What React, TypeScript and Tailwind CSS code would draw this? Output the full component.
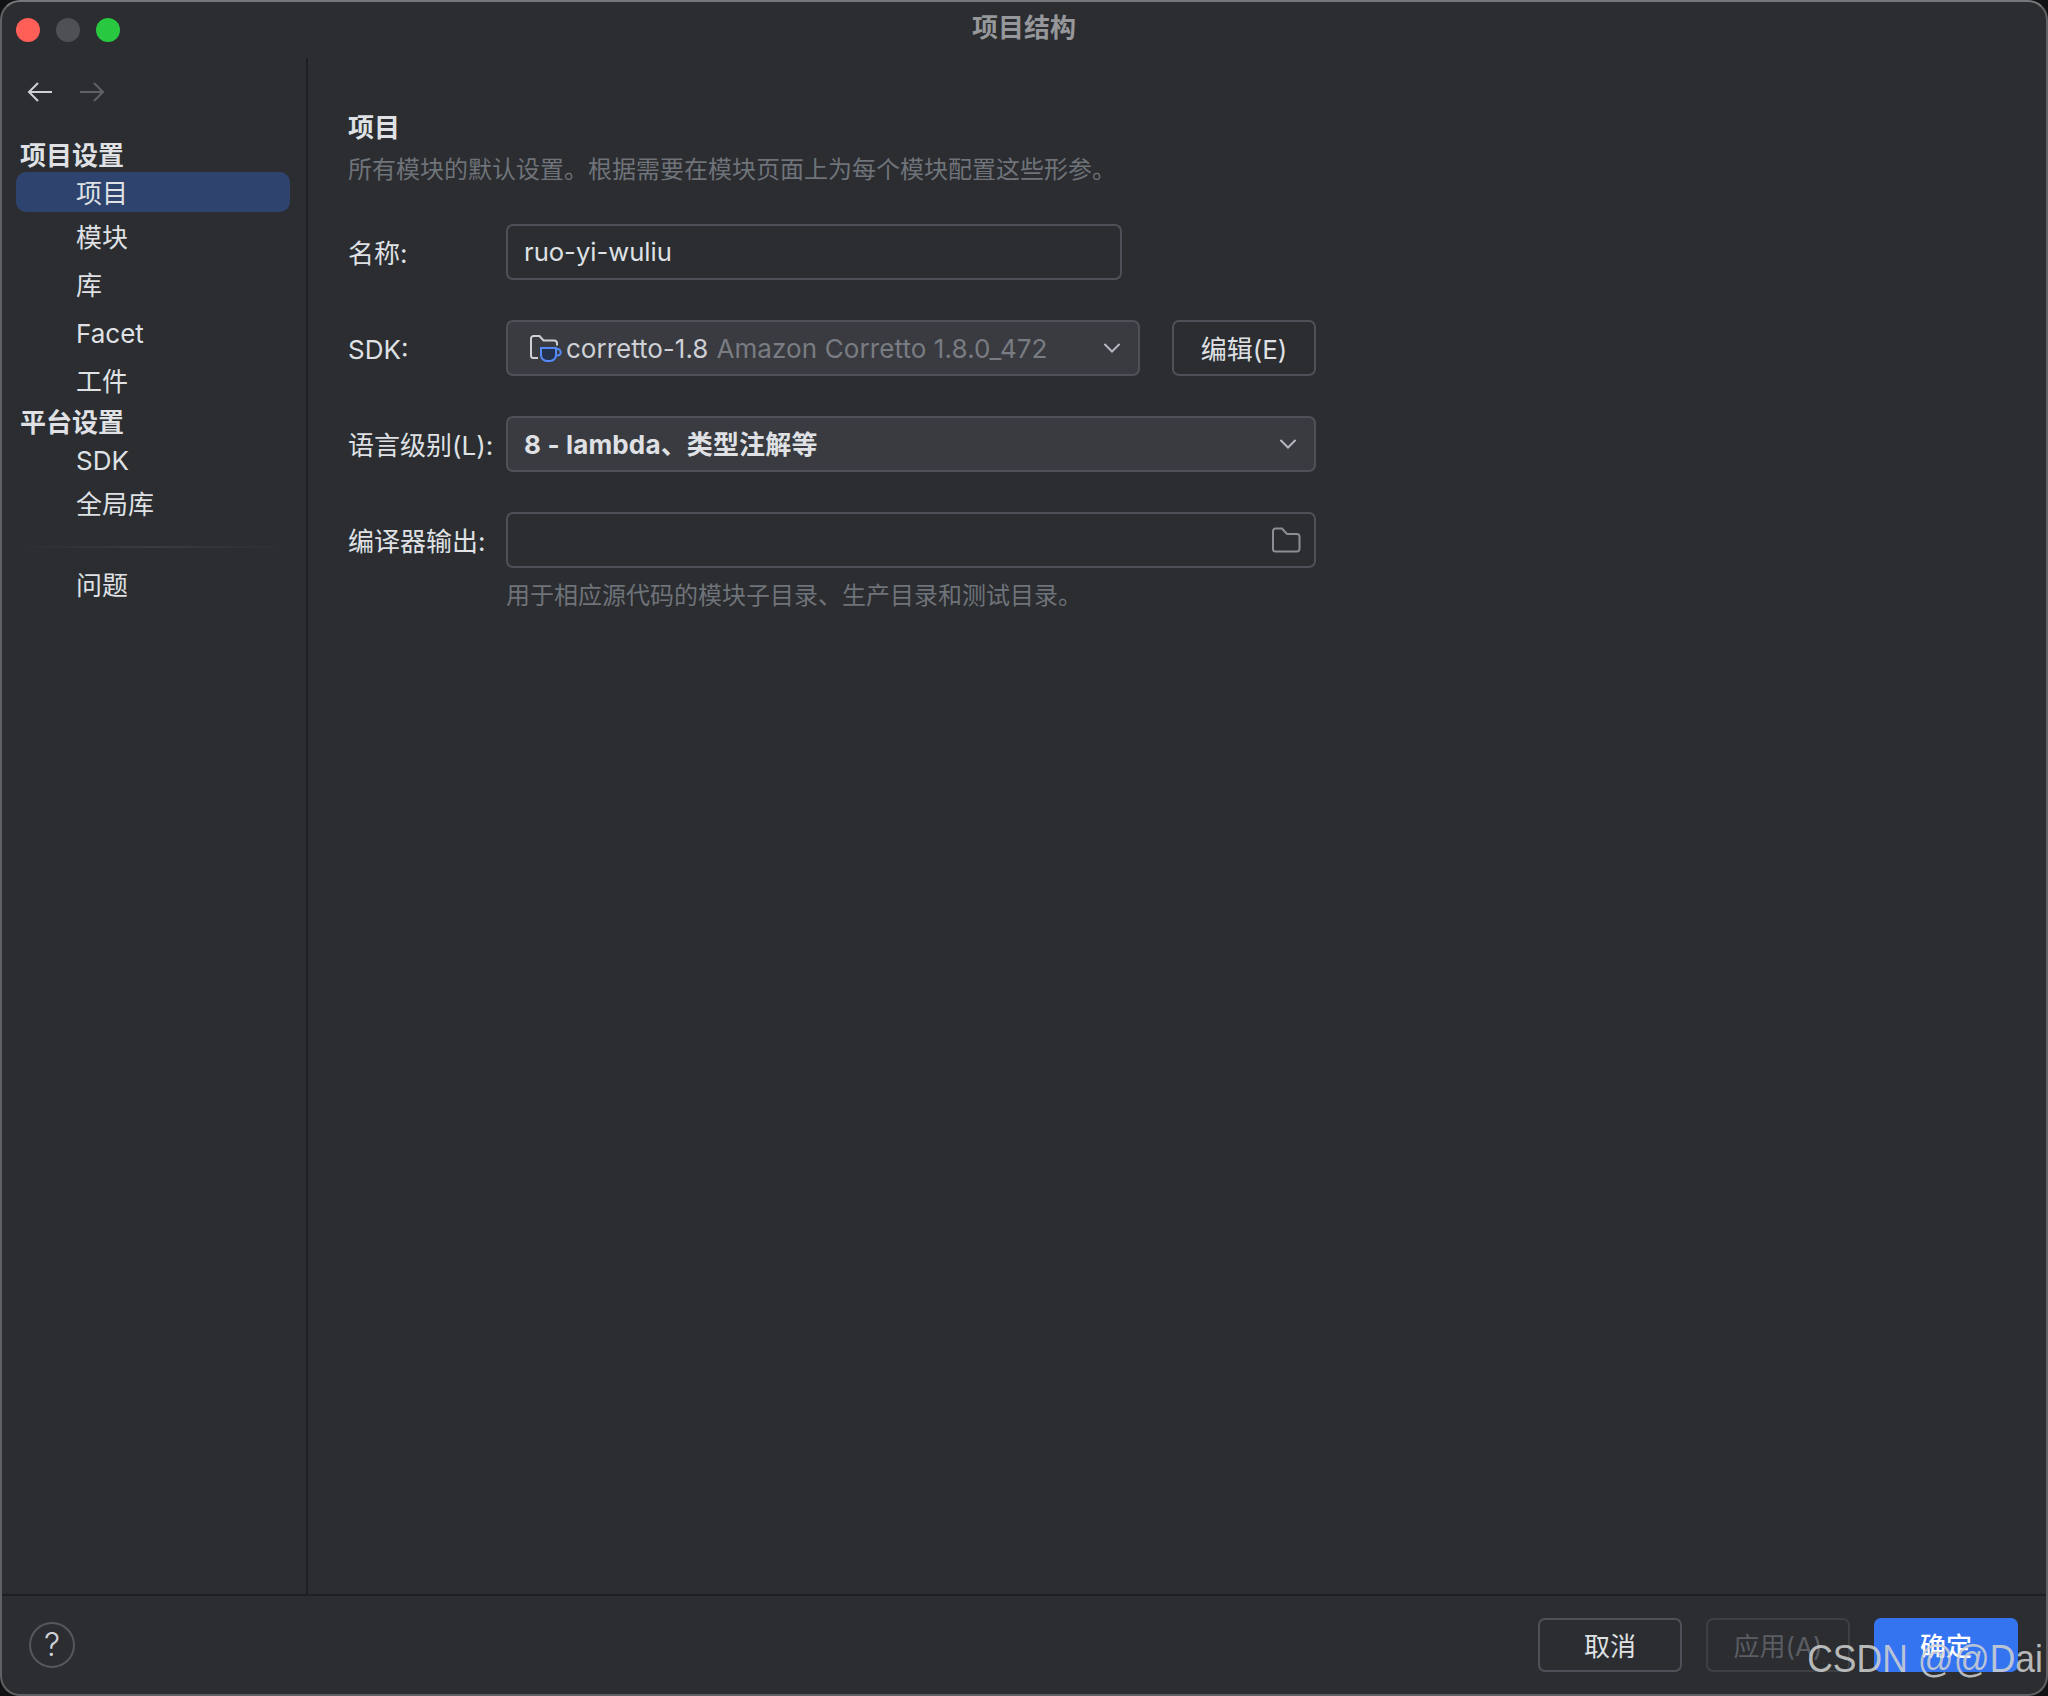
import React from 'react';

const uiFont = "font-['Inter','Noto_Sans_CJK_SC',sans-serif]";

const Chevron = () => (
  <svg width="18" height="12" viewBox="0 0 18 12" fill="none" stroke="#b4b8bf" strokeWidth="2" strokeLinecap="round">
    <path d="M2 2.5 9 9.5 16 2.5" />
  </svg>
);

const Arrow = ({ color, flip }: { color: string; flip?: boolean }) => (
  <svg width="26" height="22" viewBox="0 0 26 22" fill="none" stroke={color} strokeWidth="2" className={flip ? 'rotate-180' : ''}>
    <path d="M25 11H2M11 2 2 11l9 9" />
  </svg>
);

const JdkIcon = () => (
  <svg width="32" height="30" viewBox="0 0 32 30" fill="none" className="shrink-0">
    <path d="M8 25H3.5A2.5 2.5 0 0 1 1 22.500V5.500a2.500 2.500 0 0 1 2.500-2.500H9.500L13.500 7.500H24a3 3 0 0 1 3 3v2" stroke="#ced0d6" strokeWidth="2" />
    <path d="M11 15h15v7a6 6 0 0 1-6 6h-3a6 6 0 0 1-6-6z" fill="#25324d" stroke="#548af7" strokeWidth="2" />
    <path d="M26 16h1.500a3 3 0 0 1 0 6.500H25" stroke="#548af7" strokeWidth="2" />
  </svg>
);

const FolderIcon = () => (
  <svg width="30" height="26" viewBox="0 0 30 26" fill="none" stroke="#8b8e94" strokeWidth="2">
    <path d="M2 22V4a2.500 2.500 0 0 1 2.500-2.500H11L16 7h10a2.500 2.500 0 0 1 2.500 2.500V22a2.500 2.500 0 0 1-2.500 2.500H4.500A2.500 2.500 0 0 1 2 22z" />
  </svg>
);

const sideItems = [
  { label: '项目', cls: 'mt-[1px] bg-[#2e436e]' },
  { label: '模块', cls: 'mt-[4px]' },
  { label: '库', cls: 'mt-[8px]' },
  { label: 'Facet', cls: 'mt-2' },
  { label: '工件', cls: 'mt-2' },
];

const SideRow = ({ label, cls }: { label: string; cls: string }) => (
  <div className={`flex h-10 items-center rounded-[10px] pl-[60px] pt-[2px] text-[26px] text-[#dfe1e5] ${cls}`}>{label}</div>
);

const FieldRow = ({ label, children }: { label: string; children: React.ReactNode }) => (
  <div className="mb-10 flex h-14 items-center">
    <div className="w-[158px] shrink-0 pt-[2px] text-[26px] text-[#dfe1e5] whitespace-nowrap">{label}</div>
    {children}
  </div>
);

export default function App() {
  return (
    <div className={`relative h-[1696px] w-[2048px] overflow-hidden bg-[#111214] ${uiFont}`}>
      <div className="flex h-full flex-col rounded-[20px] border-2 border-[#606165] border-t-[#77787b] bg-[#2b2d30]">
        {/* title bar */}
        <div className="grid h-14 shrink-0 grid-cols-[1fr_auto_1fr] items-center">
          <div className="flex gap-4 pl-[14px]">
            <span className="h-6 w-6 rounded-full bg-[#ff5f57]" />
            <span className="h-6 w-6 rounded-full bg-[#4f5053]" />
            <span className="h-6 w-6 rounded-full bg-[#28c840]" />
          </div>
          <div className="pb-[5px] text-[26px] font-bold text-[#96979a]">项目结构</div>
          <div />
        </div>

        <div className="flex min-h-0 flex-1">
          {/* sidebar */}
          <aside className="w-[306px] shrink-0 border-r-2 border-[#1e1f22] pl-[14px] pr-[16px]">
            <div className="mt-5 flex h-7 items-center gap-[26px] pl-[11px]">
              <Arrow color="#ced0d6" />
              <Arrow color="#5f6165" flip />
            </div>
            <div className="mt-[33px] flex h-8 items-center pl-1 text-[26px] font-bold text-[#dfe1e5]">项目设置</div>
            {sideItems.map((item) => (
              <SideRow key={item.label} label={item.label} cls={item.cls} />
            ))}
            <div className="mt-[6px] flex h-8 items-center pl-1 text-[26px] font-bold text-[#dfe1e5]">平台设置</div>
            <SideRow label="SDK" cls="mt-[1px]" />
            <SideRow label="全局库" cls="mt-1" />
            <div className="mt-[23px] h-[2px] bg-gradient-to-r from-[#2b2d30] via-[#393b40] to-[#2b2d30]" />
            <SideRow label="问题" cls="mt-4" />
          </aside>

          {/* project settings */}
          <main className="min-w-0 flex-1 pl-10 pt-[53px]">
            <div className="flex h-8 items-center text-[26px] font-bold text-[#dfe1e5]">项目</div>
            <div className="mt-[11px] flex h-8 items-center text-[24px] text-[#6f737a]">
              所有模块的默认设置。根据需要在模块页面上为每个模块配置这些形参。
            </div>
            <div className="h-[38px]" />

            <FieldRow label="名称:">
              <div className="flex h-14 w-[616px] items-center rounded-[7px] border-2 border-[#4e5157] bg-[#2b2d30] pl-4 pt-[1px] text-[25.6px] text-[#dfe1e5]">
                ruo-yi-wuliu
              </div>
            </FieldRow>

            <FieldRow label="SDK:">
              <div className="flex h-14 w-[634px] items-center rounded-[7px] border-2 border-[#4e5157] bg-[#393b40] pl-[22px] pr-[17px] text-[26px]">
                <JdkIcon />
                <span className="ml-[4px] pt-[1px] text-[#ced0d6]">corretto-1.8</span>
                <span className="ml-2 pt-[1px] tracking-[0.1px] text-[#797c82]">Amazon Corretto 1.8.0_472</span>
                <span className="ml-auto"><Chevron /></span>
              </div>
              <div className="ml-8 flex h-14 w-[144px] items-center justify-center rounded-[7px] border-2 border-[#4e5157] pt-[2px] text-[26px] text-[#dfe1e5]">
                编辑(E)
              </div>
            </FieldRow>

            <FieldRow label="语言级别(L):">
              <div className="flex h-14 w-[810px] items-center justify-between rounded-[7px] border-2 border-[#4e5157] bg-[#393b40] pl-4 pr-[17px] text-[26px] font-bold text-[#dfe1e5]">
                <span className="pt-[1px] tracking-[0.15px]">8 - lambda、类型注解等</span>
                <Chevron />
              </div>
            </FieldRow>

            <div className="flex h-14 items-center">
              <div className="w-[158px] shrink-0 pt-[2px] text-[26px] text-[#dfe1e5] whitespace-nowrap">编译器输出:</div>
              <div className="flex h-14 w-[810px] items-center justify-end rounded-[7px] border-2 border-[#4e5157] pr-[13px]">
                <FolderIcon />
              </div>
            </div>
            <div className="ml-[158px] mt-3 flex h-8 items-center text-[24px] text-[#6f737a]">
              用于相应源代码的模块子目录、生产目录和测试目录。
            </div>
          </main>
        </div>

        {/* footer */}
        <div className="flex h-[100px] shrink-0 items-center justify-between border-t-2 border-[#1e1f22] pl-[27px] pr-[28px]">
          <div className="flex h-[46px] w-[46px] items-center justify-center rounded-full border-2 border-[#55575c] text-[32px] font-light text-[#ced0d6]">?</div>
          <div className="flex gap-6">
            <div className="flex h-[54px] w-[144px] items-center justify-center rounded-[7px] border-2 border-[#4e5157] pt-[2px] text-[26px] text-[#dfe1e5]">取消</div>
            <div className="flex h-[54px] w-[144px] items-center justify-center rounded-[7px] border-2 border-[#3d3f43] pt-[2px] text-[26px] text-[#5a5d63]">应用(A)</div>
            <div className="flex h-[54px] w-[144px] items-center justify-center rounded-[7px] bg-[#3574f0] pt-[2px] text-[26px] font-medium text-white">确定</div>
          </div>
        </div>
      </div>

      {/* CSDN watermark over the screenshot */}
      <div className="absolute bottom-[17px] right-[5px] origin-bottom scale-y-[1.08] font-['Liberation_Sans',sans-serif] text-[35.5px] leading-none text-[#d2d2d2]/85">CSDN @@Dai</div>
    </div>
  );
}
